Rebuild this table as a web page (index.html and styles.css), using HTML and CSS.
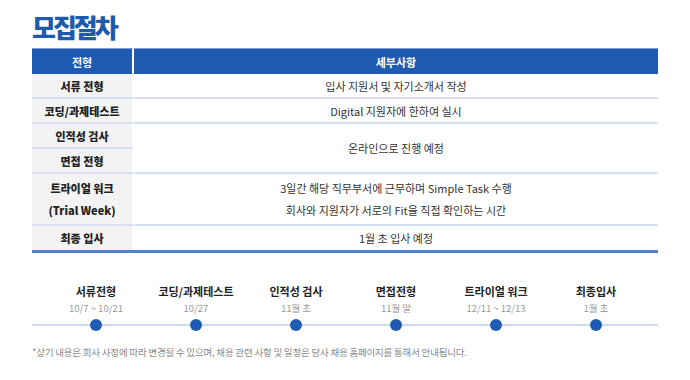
FILE: index.html
```html
<html>
<head>
<meta charset="UTF-8" />
<title>모집절차</title>
<link rel="stylesheet" href="styles.css">
</head>
<body>
<div class="page">
  <h1 class="title">모집절차</h1>

  <table class="steps">
    <thead>
      <tr>
        <th class="col-type">전형</th>
        <th>세부사항</th>
      </tr>
    </thead>
    <tbody>
      <tr>
        <td class="col-type">서류 전형</td>
        <td>입사 지원서 및 자기소개서 작성</td>
      </tr>
      <tr>
        <td class="col-type">코딩/과제테스트</td>
        <td>Digital 지원자에 한하여 실시</td>
      </tr>
      <tr>
        <td class="col-type">인적성 검사</td>
        <td rowspan="2">온라인으로 진행 예정</td>
      </tr>
      <tr>
        <td class="col-type">면접 전형</td>
      </tr>
      <tr class="tall">
        <td class="col-type">트라이얼 워크<br>(Trial Week)</td>
        <td>3일간 해당 직무부서에 근무하며 Simple Task 수행<br>회사와 지원자가 서로의 Fit을 직접 확인하는 시간</td>
      </tr>
      <tr class="last">
        <td class="col-type">최종 입사</td>
        <td>1월 초 입사 예정</td>
      </tr>
    </tbody>
  </table>

  <div class="timeline">
    <div class="step">
      <div class="step-name">서류전형</div>
      <div class="step-date">10/7 ~ 10/21</div>
      <div class="dot"></div>
    </div>
    <div class="step">
      <div class="step-name">코딩/과제테스트</div>
      <div class="step-date">10/27</div>
      <div class="dot"></div>
    </div>
    <div class="step">
      <div class="step-name">인적성 검사</div>
      <div class="step-date">11월 초</div>
      <div class="dot"></div>
    </div>
    <div class="step">
      <div class="step-name">면접전형</div>
      <div class="step-date">11월 말</div>
      <div class="dot"></div>
    </div>
    <div class="step">
      <div class="step-name">트라이얼 워크</div>
      <div class="step-date">12/11 ~ 12/13</div>
      <div class="dot"></div>
    </div>
    <div class="step">
      <div class="step-name">최종입사</div>
      <div class="step-date">1월 초</div>
      <div class="dot"></div>
    </div>
  </div>

  <p class="note">*상기 내용은 회사 사정에 따라 변경될 수 있으며, 채용 관련 사항 및 일정은 당사 채용 홈페이지를 통해서 안내됩니다.</p>
</div>
</body>
</html>
```

FILE: styles.css
```css
body {
  margin: 0;
  background: #fff;
  font-family: "Noto Sans CJK KR", "Noto Sans", sans-serif;
  color: #333;
}

.page {
  padding: 12px 32px 0 32px;
}

.title {
  margin: 0 0 6px 0;
  font-size: 26px;
  line-height: 30px;
  font-weight: 900;
  color: #1e5aae;
  letter-spacing: -3px;
}

/* Table */
.steps {
  width: 100%;
  border-collapse: separate;
  border-spacing: 0;
  font-size: 11px;
  border-bottom: 3px solid #4f83cf;
}

.steps th {
  height: 26px;
  padding: 0;
  background: #1f5bb1;
  color: #fff;
  font-weight: 700;
  font-size: 11px;
  border-top: 1px solid #7f9fd4;
}

.steps td {
  height: 25px;
  padding: 0;
  text-align: center;
  line-height: 22px;
  border-bottom: 2px solid #d6e0f1;
  color: #333;
}

.steps .col-type {
  width: 100px;
  border-right: 2px solid #fff;
}

.steps td.col-type {
  background: #f3f3f3;
  font-weight: 900;
  color: #222;
}

.steps tr.tall td {
  height: 52px;
}

.steps tr.last td {
  height: 24px;
  border-bottom: none;
}

/* Timeline */
.timeline {
  position: relative;
  display: flex;
  margin-top: 30px;
  padding: 0 12px 0 14px;
}

.timeline::before {
  content: "";
  position: absolute;
  left: 0;
  right: 0;
  bottom: 5px;
  height: 2px;
  background: #ccd9ef;
}

.step {
  width: 100px;
  display: flex;
  flex-direction: column;
  align-items: center;
  position: relative;
}

.step-name {
  font-size: 11px;
  font-weight: 700;
  color: #222;
  line-height: 17px;
}

.step-date {
  font-size: 9.5px;
  color: #999;
  line-height: 16px;
  margin-bottom: 3px;
}

.dot {
  width: 12px;
  height: 12px;
  border-radius: 50%;
  background: #1f5bb1;
}

.note {
  margin: 14px 0 0 0;
  font-size: 9.5px;
  color: #888;
  letter-spacing: -0.2px;
}
```
